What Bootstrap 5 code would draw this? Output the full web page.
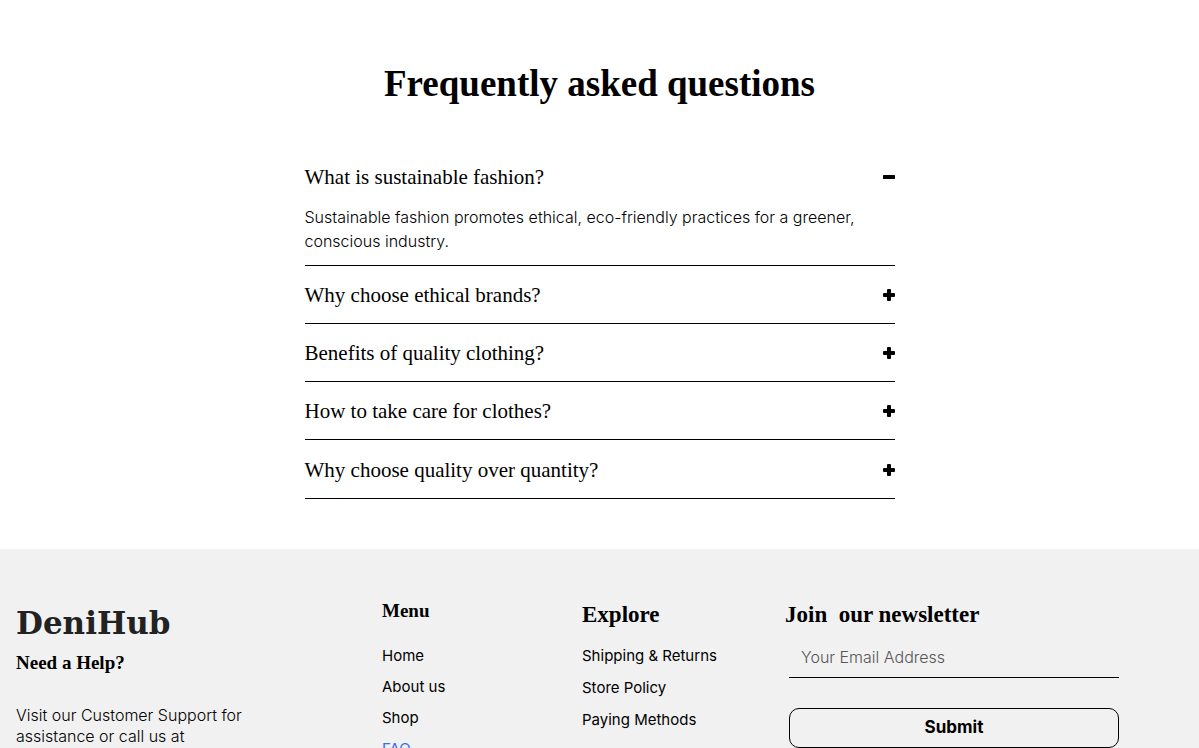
<!DOCTYPE html>
<html lang="en">
<head>
<meta charset="utf-8">
<meta name="viewport" content="width=device-width, initial-scale=1">
<title>DeniHub – Frequently asked questions</title>
<link href="https://cdn.jsdelivr.net/npm/bootstrap@5.3.0/dist/css/bootstrap.min.css" rel="stylesheet">
<style>
  :root { --display: "Liberation Serif", serif; --text: Inter, sans-serif; }
  body { font-family: var(--text); font-size: 15px; line-height: 24px; color: #000; background: #fff; }
  h1, h2, h3 { font-family: var(--display); font-weight: 700; margin: 0; }
  .faq { padding: 60px 16px 50px; }
  .faq-title { font-size: 37px; line-height: 48px; margin-bottom: 40px; }
  .faq-list { max-width: 590px; --bs-accordion-bg: transparent; --bs-accordion-color: #000; }
  .faq-list .accordion-item { border: 0; border-bottom: 1px solid #000; border-radius: 0; }
  .faq-list .accordion-item:last-child { padding-top: 1px; }
  .faq-list .accordion-button { height: 57px; padding: 0; background: none; box-shadow: none; color: #000; font-family: var(--display); font-weight: 400; font-size: 21px; line-height: 24px; }
  .faq-list .accordion-button::after { display: none; }
  .faq-list .accordion-body { padding: 0 0 12px; font-size: 16px; font-weight: 300; line-height: 24px; }
  .accordion-button .bar-v { display: none; }
  .accordion-button.collapsed .bar-v { display: inline; }
  .site-footer { background: #f1f1f1; padding: 50px 0 50px 16px; }
  .footer-grid { display: grid; grid-template-columns: 366fr 200fr 203fr 414fr; }
  .brand { font-family: "DejaVu Serif", serif; font-weight: 700; font-size: 31px; line-height: 32px; color: #222; }
  .title-sm { font-size: 19px; line-height: 24px; }
  .title-lg { font-size: 23px; line-height: 32px; }
  .help-title { margin-top: 12px; }
  .help-text { margin-top: 30px; font-size: 16px; font-weight: 300; line-height: 21px; max-width: 260px; }
  .menu-list { margin-top: 21px; gap: 7px; }
  .explore-list { margin-top: 13px; gap: 8px; }
  .link-col a { color: #000; text-decoration: none; }
  .link-col a.active { color: #3a6cf6; }
  .newsletter { padding-right: 80px; }
  .newsletter .form-control { height: 42px; margin: 5px 0 30px; padding: 0 12px; border: 0; border-bottom: 1px solid #000; border-radius: 0; background: transparent; font-size: 16px; font-weight: 300; color: #000; }
  .newsletter .form-control::placeholder { color: #555; opacity: 1; }
  .newsletter .btn { height: 40px; border: 1px solid #000; border-radius: 10px; color: #000; font-size: 17px; font-weight: 700; line-height: 24px; padding: 0 12px 2px; }
  @media (max-width: 767px) { .footer-grid { grid-template-columns: 1fr; gap: 32px; } .newsletter { padding-right: 16px; } }
</style>
</head>
<body>
<main class="faq">
  <h1 class="faq-title text-center">Frequently asked questions</h1>
  <div class="accordion faq-list mx-auto" id="faq">
    <div class="accordion-item">
      <h2 class="accordion-header"><button class="accordion-button" type="button" data-bs-toggle="collapse" data-bs-target="#q1" aria-expanded="true" aria-controls="q1"><span class="me-auto">What is sustainable fashion?</span><svg width="12" height="12" viewBox="0 0 12 12" aria-hidden="true"><rect y="4" width="12" height="4" rx=".5"/><rect class="bar-v" x="4" width="4" height="12" rx="1"/></svg></button></h2>
      <div id="q1" class="accordion-collapse collapse show" data-bs-parent="#faq"><div class="accordion-body">Sustainable fashion promotes ethical, eco-friendly practices for a greener, conscious industry.</div></div>
    </div>
    <div class="accordion-item">
      <h2 class="accordion-header"><button class="accordion-button collapsed" type="button" aria-expanded="false"><span class="me-auto">Why choose ethical brands?</span><svg width="12" height="12" viewBox="0 0 12 12" aria-hidden="true"><rect y="4" width="12" height="4" rx="1"/><rect class="bar-v" x="4" width="4" height="12" rx="1"/></svg></button></h2>
    </div>
    <div class="accordion-item">
      <h2 class="accordion-header"><button class="accordion-button collapsed" type="button" aria-expanded="false"><span class="me-auto">Benefits of quality clothing?</span><svg width="12" height="12" viewBox="0 0 12 12" aria-hidden="true"><rect y="4" width="12" height="4" rx="1"/><rect class="bar-v" x="4" width="4" height="12" rx="1"/></svg></button></h2>
    </div>
    <div class="accordion-item">
      <h2 class="accordion-header"><button class="accordion-button collapsed" type="button" aria-expanded="false"><span class="me-auto">How to take care for clothes?</span><svg width="12" height="12" viewBox="0 0 12 12" aria-hidden="true"><rect y="4" width="12" height="4" rx="1"/><rect class="bar-v" x="4" width="4" height="12" rx="1"/></svg></button></h2>
    </div>
    <div class="accordion-item">
      <h2 class="accordion-header"><button class="accordion-button collapsed" type="button" aria-expanded="false"><span class="me-auto">Why choose quality over quantity?</span><svg width="12" height="12" viewBox="0 0 12 12" aria-hidden="true"><rect y="4" width="12" height="4" rx="1"/><rect class="bar-v" x="4" width="4" height="12" rx="1"/></svg></button></h2>
    </div>
  </div>
</main>
<footer class="site-footer">
  <div class="footer-grid">
    <section class="pt-2">
      <div class="brand">DeniHub</div>
      <h2 class="title-sm help-title">Need a Help?</h2>
      <p class="help-text mb-0">Visit our Customer Support for assistance or call us at</p>
    </section>
    <nav class="link-col" aria-label="Menu">
      <h2 class="title-sm">Menu</h2>
      <ul class="list-unstyled d-flex flex-column menu-list mb-0">
        <li><a href="#">Home</a></li><li><a href="#">About us</a></li><li><a href="#">Shop</a></li><li><a class="active" href="#" aria-current="page">FAQ</a></li>
      </ul>
    </nav>
    <nav class="link-col" aria-label="Explore">
      <h2 class="title-lg">Explore</h2>
      <ul class="list-unstyled d-flex flex-column explore-list mb-0">
        <li><a href="#">Shipping &amp; Returns</a></li><li><a href="#">Store Policy</a></li><li><a href="#">Paying Methods</a></li>
      </ul>
    </nav>
    <form class="newsletter">
      <h2 class="title-lg">Join&nbsp; our newsletter</h2>
      <div class="ps-1">
        <label class="visually-hidden" for="email">Your Email Address</label>
        <input class="form-control" type="email" id="email" placeholder="Your Email Address">
        <button class="btn w-100" type="submit">Submit</button>
      </div>
    </form>
  </div>
</footer>
<script src="https://cdn.jsdelivr.net/npm/bootstrap@5.3.0/dist/js/bootstrap.bundle.min.js"></script>
</body>
</html>
